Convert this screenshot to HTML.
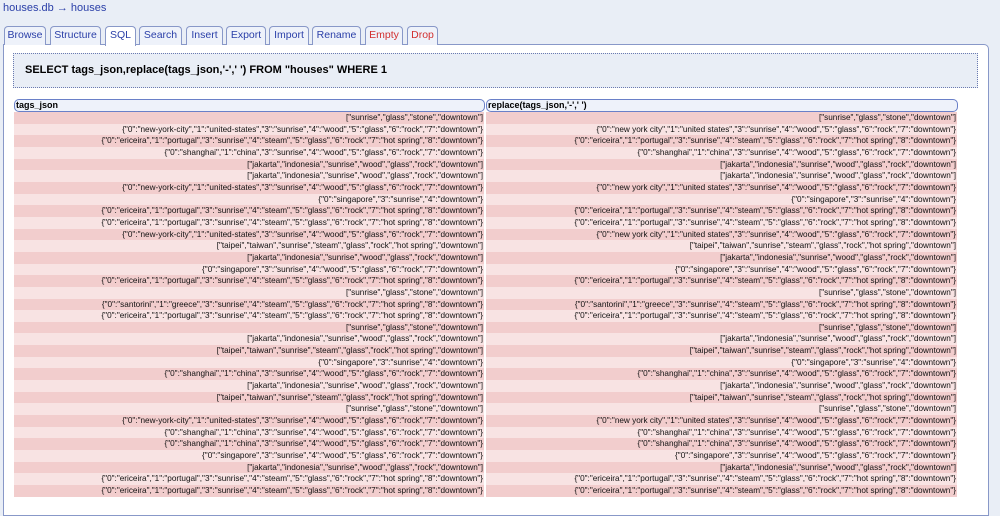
<!DOCTYPE html>
<html><head><meta charset="utf-8"><style>
body{margin:0;width:1000px;height:499px;overflow:hidden;background:#e9eef6;font-family:"Liberation Sans",Arial,sans-serif;position:relative}
.crumb{position:absolute;left:3px;top:2px;font-size:11px;color:#2a3fa8}
.tab{position:absolute;top:26px;height:19px;box-sizing:border-box;border:1px solid #8898c8;border-bottom:none;border-radius:4px 4px 0 0;background:#eef2fa;font-size:10.5px;color:#2a3fa8;text-align:center;line-height:17px;z-index:2}
.tab.red{color:#d23030}
.tab.act{background:#fff;height:20px}
.panel{position:absolute;left:3px;top:44px;width:984px;height:470px;background:#fff;border:1px solid #8898c8;border-radius:0 5px 0 0;z-index:1}
.sql{position:absolute;left:13px;top:53px;width:965px;height:35px;box-sizing:border-box;border:1px dotted #6a7ab0;background:#e9eef6;font-size:11px;font-weight:bold;line-height:33px;padding-left:11px;z-index:2}
.hd{position:absolute;top:99px;height:11px;border:1px solid #6a80c8;border-radius:5px;background:#eef2fa;font-size:9px;font-weight:bold;line-height:11px;padding-left:1px;z-index:2}
.col{position:absolute;top:112px;font-size:8.2px;color:#111;z-index:2}
.col div{height:11.66px;line-height:11.66px;text-align:right;white-space:nowrap;overflow:hidden;padding-right:1px}
.col div:nth-child(odd){background:#f2cdcd}
.col div:nth-child(even){background:#f8e3e3}
</style></head><body>
<div class="crumb">houses.db → houses</div>
<div class="tab" style="left:4px;width:42px">Browse</div>
<div class="tab" style="left:50px;width:51px">Structure</div>
<div class="tab act" style="left:105px;width:31px">SQL</div>
<div class="tab" style="left:139px;width:43px">Search</div>
<div class="tab" style="left:186px;width:37px">Insert</div>
<div class="tab" style="left:226px;width:40px">Export</div>
<div class="tab" style="left:269px;width:40px">Import</div>
<div class="tab" style="left:312px;width:49px">Rename</div>
<div class="tab red" style="left:365px;width:38px">Empty</div>
<div class="tab red" style="left:407px;width:31px">Drop</div>
<div class="panel"></div>
<div class="sql">SELECT tags_json,replace(tags_json,'-',' ') FROM "houses" WHERE 1</div>
<div class="hd" style="left:14px;width:468px">tags_json</div>
<div class="hd" style="left:486px;width:469px">replace(tags_json,'-',' ')</div>
<div class="col" style="left:14px;width:470px">
<div>["sunrise","glass","stone","downtown"]</div>
<div>{"0":"new-york-city","1":"united-states","3":"sunrise","4":"wood","5":"glass","6":"rock","7":"downtown"}</div>
<div>{"0":"ericeira","1":"portugal","3":"sunrise","4":"steam","5":"glass","6":"rock","7":"hot spring","8":"downtown"}</div>
<div>{"0":"shanghai","1":"china","3":"sunrise","4":"wood","5":"glass","6":"rock","7":"downtown"}</div>
<div>["jakarta","indonesia","sunrise","wood","glass","rock","downtown"]</div>
<div>["jakarta","indonesia","sunrise","wood","glass","rock","downtown"]</div>
<div>{"0":"new-york-city","1":"united-states","3":"sunrise","4":"wood","5":"glass","6":"rock","7":"downtown"}</div>
<div>{"0":"singapore","3":"sunrise","4":"downtown"}</div>
<div>{"0":"ericeira","1":"portugal","3":"sunrise","4":"steam","5":"glass","6":"rock","7":"hot spring","8":"downtown"}</div>
<div>{"0":"ericeira","1":"portugal","3":"sunrise","4":"steam","5":"glass","6":"rock","7":"hot spring","8":"downtown"}</div>
<div>{"0":"new-york-city","1":"united-states","3":"sunrise","4":"wood","5":"glass","6":"rock","7":"downtown"}</div>
<div>["taipei","taiwan","sunrise","steam","glass","rock","hot spring","downtown"]</div>
<div>["jakarta","indonesia","sunrise","wood","glass","rock","downtown"]</div>
<div>{"0":"singapore","3":"sunrise","4":"wood","5":"glass","6":"rock","7":"downtown"}</div>
<div>{"0":"ericeira","1":"portugal","3":"sunrise","4":"steam","5":"glass","6":"rock","7":"hot spring","8":"downtown"}</div>
<div>["sunrise","glass","stone","downtown"]</div>
<div>{"0":"santorini","1":"greece","3":"sunrise","4":"steam","5":"glass","6":"rock","7":"hot spring","8":"downtown"}</div>
<div>{"0":"ericeira","1":"portugal","3":"sunrise","4":"steam","5":"glass","6":"rock","7":"hot spring","8":"downtown"}</div>
<div>["sunrise","glass","stone","downtown"]</div>
<div>["jakarta","indonesia","sunrise","wood","glass","rock","downtown"]</div>
<div>["taipei","taiwan","sunrise","steam","glass","rock","hot spring","downtown"]</div>
<div>{"0":"singapore","3":"sunrise","4":"downtown"}</div>
<div>{"0":"shanghai","1":"china","3":"sunrise","4":"wood","5":"glass","6":"rock","7":"downtown"}</div>
<div>["jakarta","indonesia","sunrise","wood","glass","rock","downtown"]</div>
<div>["taipei","taiwan","sunrise","steam","glass","rock","hot spring","downtown"]</div>
<div>["sunrise","glass","stone","downtown"]</div>
<div>{"0":"new-york-city","1":"united-states","3":"sunrise","4":"wood","5":"glass","6":"rock","7":"downtown"}</div>
<div>{"0":"shanghai","1":"china","3":"sunrise","4":"wood","5":"glass","6":"rock","7":"downtown"}</div>
<div>{"0":"shanghai","1":"china","3":"sunrise","4":"wood","5":"glass","6":"rock","7":"downtown"}</div>
<div>{"0":"singapore","3":"sunrise","4":"wood","5":"glass","6":"rock","7":"downtown"}</div>
<div>["jakarta","indonesia","sunrise","wood","glass","rock","downtown"]</div>
<div>{"0":"ericeira","1":"portugal","3":"sunrise","4":"steam","5":"glass","6":"rock","7":"hot spring","8":"downtown"}</div>
<div>{"0":"ericeira","1":"portugal","3":"sunrise","4":"steam","5":"glass","6":"rock","7":"hot spring","8":"downtown"}</div>
</div>
<div class="col" style="left:486px;width:471px">
<div>["sunrise","glass","stone","downtown"]</div>
<div>{"0":"new york city","1":"united states","3":"sunrise","4":"wood","5":"glass","6":"rock","7":"downtown"}</div>
<div>{"0":"ericeira","1":"portugal","3":"sunrise","4":"steam","5":"glass","6":"rock","7":"hot spring","8":"downtown"}</div>
<div>{"0":"shanghai","1":"china","3":"sunrise","4":"wood","5":"glass","6":"rock","7":"downtown"}</div>
<div>["jakarta","indonesia","sunrise","wood","glass","rock","downtown"]</div>
<div>["jakarta","indonesia","sunrise","wood","glass","rock","downtown"]</div>
<div>{"0":"new york city","1":"united states","3":"sunrise","4":"wood","5":"glass","6":"rock","7":"downtown"}</div>
<div>{"0":"singapore","3":"sunrise","4":"downtown"}</div>
<div>{"0":"ericeira","1":"portugal","3":"sunrise","4":"steam","5":"glass","6":"rock","7":"hot spring","8":"downtown"}</div>
<div>{"0":"ericeira","1":"portugal","3":"sunrise","4":"steam","5":"glass","6":"rock","7":"hot spring","8":"downtown"}</div>
<div>{"0":"new york city","1":"united states","3":"sunrise","4":"wood","5":"glass","6":"rock","7":"downtown"}</div>
<div>["taipei","taiwan","sunrise","steam","glass","rock","hot spring","downtown"]</div>
<div>["jakarta","indonesia","sunrise","wood","glass","rock","downtown"]</div>
<div>{"0":"singapore","3":"sunrise","4":"wood","5":"glass","6":"rock","7":"downtown"}</div>
<div>{"0":"ericeira","1":"portugal","3":"sunrise","4":"steam","5":"glass","6":"rock","7":"hot spring","8":"downtown"}</div>
<div>["sunrise","glass","stone","downtown"]</div>
<div>{"0":"santorini","1":"greece","3":"sunrise","4":"steam","5":"glass","6":"rock","7":"hot spring","8":"downtown"}</div>
<div>{"0":"ericeira","1":"portugal","3":"sunrise","4":"steam","5":"glass","6":"rock","7":"hot spring","8":"downtown"}</div>
<div>["sunrise","glass","stone","downtown"]</div>
<div>["jakarta","indonesia","sunrise","wood","glass","rock","downtown"]</div>
<div>["taipei","taiwan","sunrise","steam","glass","rock","hot spring","downtown"]</div>
<div>{"0":"singapore","3":"sunrise","4":"downtown"}</div>
<div>{"0":"shanghai","1":"china","3":"sunrise","4":"wood","5":"glass","6":"rock","7":"downtown"}</div>
<div>["jakarta","indonesia","sunrise","wood","glass","rock","downtown"]</div>
<div>["taipei","taiwan","sunrise","steam","glass","rock","hot spring","downtown"]</div>
<div>["sunrise","glass","stone","downtown"]</div>
<div>{"0":"new york city","1":"united states","3":"sunrise","4":"wood","5":"glass","6":"rock","7":"downtown"}</div>
<div>{"0":"shanghai","1":"china","3":"sunrise","4":"wood","5":"glass","6":"rock","7":"downtown"}</div>
<div>{"0":"shanghai","1":"china","3":"sunrise","4":"wood","5":"glass","6":"rock","7":"downtown"}</div>
<div>{"0":"singapore","3":"sunrise","4":"wood","5":"glass","6":"rock","7":"downtown"}</div>
<div>["jakarta","indonesia","sunrise","wood","glass","rock","downtown"]</div>
<div>{"0":"ericeira","1":"portugal","3":"sunrise","4":"steam","5":"glass","6":"rock","7":"hot spring","8":"downtown"}</div>
<div>{"0":"ericeira","1":"portugal","3":"sunrise","4":"steam","5":"glass","6":"rock","7":"hot spring","8":"downtown"}</div>
</div>
</body></html>
